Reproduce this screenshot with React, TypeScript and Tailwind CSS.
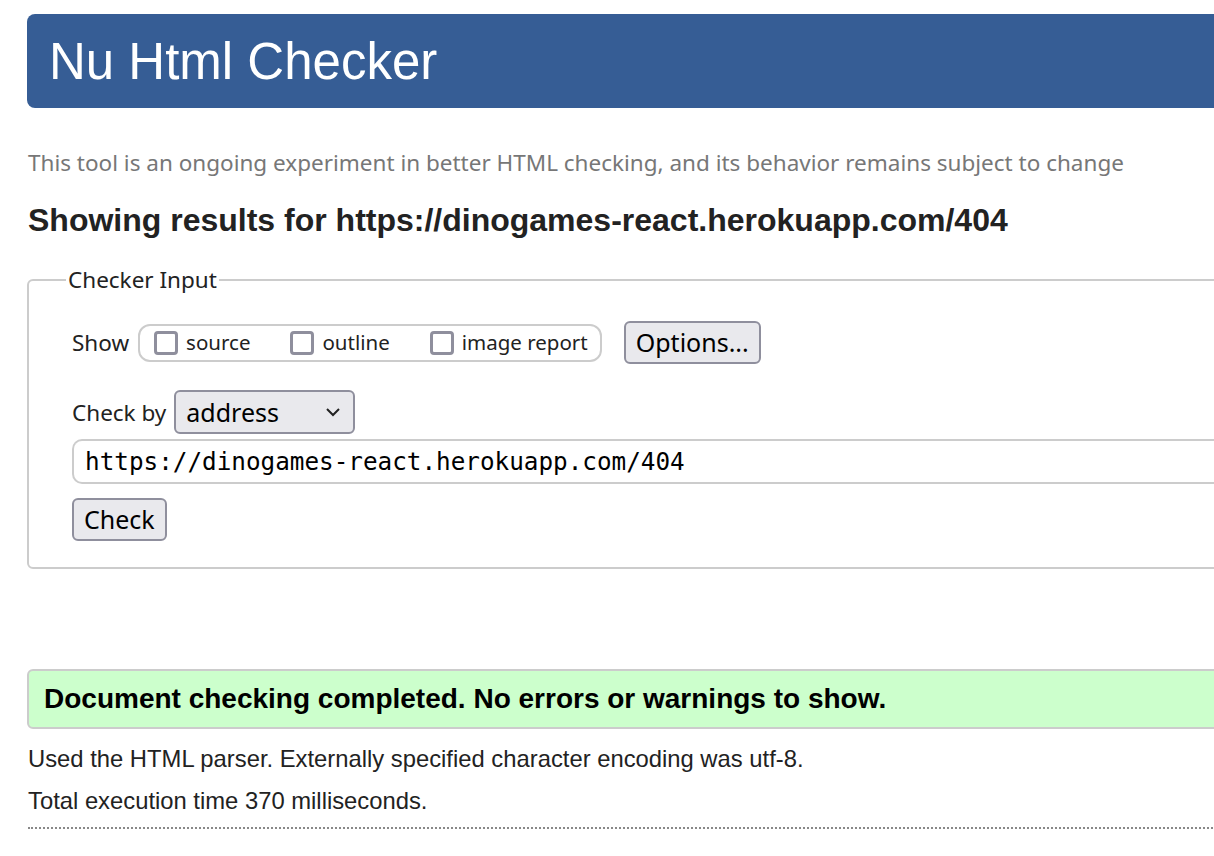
const sans = "font-['Liberation_Sans',Arial,sans-serif]";
const ui = "font-['Noto_Sans','Open_Sans',sans-serif]";

const Box = ({ label }: { label: string }) => (
  <label className="flex items-center gap-[8px] text-[20.5px]">
    <span className="w-[24px] h-[24px] rounded-[4px] border-[3px] border-[#8f8f9d] bg-white" />
    <span>{label}</span>
  </label>
);

const App = () => {
  return (
    <div className="w-[1214px] h-[856px] overflow-hidden bg-white">
      <div className="w-[1400px] pl-[27px] pt-[14px]">
        <div className={`h-[94px] rounded-l-[8px] bg-[#365d95] flex items-center pl-[22px] ${sans}`}>
          <h1 className="text-white text-[51px] leading-none">Nu Html Checker</h1>
        </div>

        <p className={`mt-[38px] pl-[1px] text-[22.5px] leading-[33px] text-[#777] ${ui}`}>
          This tool is an ongoing experiment in better HTML checking, and its behavior remains subject to change
        </p>
        <h2 className={`mt-[21px] pl-[1px] text-[32px] leading-[40px] font-bold text-[#222] ${sans}`}>
          Showing results for https://dinogames-react.herokuapp.com/404
        </h2>

        <fieldset className={`mt-[23px] border-2 border-[#ccc] rounded-[6px] pl-[43px] pr-0 pb-[26px] text-[22.5px] leading-[33px] text-[#222] ${ui}`}>
          <legend className="px-[2px] -ml-[6px]">Checker Input</legend>

          <div className="flex items-center h-[43px] mt-[25px]">
            <span className="mr-[9px]">Show</span>
            <div className="flex items-center h-[38px] border-2 border-[#ccc] rounded-[12px] pl-[14px] pr-[12px] gap-[40px]">
              <Box label="source" />
              <Box label="outline" />
              <Box label="image report" />
            </div>
            <button className="ml-[22px] h-[43px] px-[10px] rounded-[6px] border-2 border-[#8f8f9d] bg-[#e9e9ed] text-[25px] text-black">
              Options...
            </button>
          </div>

          <div className="flex items-center mt-[26px]">
            <span className="mr-[8px]">Check by</span>
            <div className="flex items-center justify-between w-[181px] h-[44px] rounded-[6px] border-2 border-[#8f8f9d] bg-[#e9e9ed] pl-[10px] pr-[12px] text-[25px] text-black">
              <span>address</span>
              <svg width="16" height="10" viewBox="0 0 16 10" fill="none" stroke="#222" strokeWidth="2">
                <path d="M2 2l6 6 6-6" />
              </svg>
            </div>
          </div>

          <div className="mt-[5px] h-[45px] border-2 border-[#ccc] rounded-l-[10px] border-r-0 flex items-center pl-[11px] font-['DejaVu_Sans_Mono','Liberation_Mono',monospace] text-[24.3px] text-black">
            https://dinogames-react.herokuapp.com/404
          </div>

          <button className="mt-[14px] h-[43px] px-[10px] rounded-[6px] border-2 border-[#8f8f9d] bg-[#e9e9ed] text-[25px] leading-none text-black">
            Check
          </button>
        </fieldset>

        <div className={`mt-[100px] h-[60px] flex items-center pl-[15px] bg-[#ccffcc] border-2 border-[#ccc] rounded-l-[6px] ${sans}`}>
          <span className="text-[28px] font-bold text-black">Document checking completed. No errors or warnings to show.</span>
        </div>

        <p className={`mt-[12px] pl-[1px] text-[23.8px] leading-[36px] text-[#222] ${sans}`}>
          Used the HTML parser. Externally specified character encoding was utf-8.
        </p>
        <p className={`mt-[6px] pl-[1px] text-[23.8px] leading-[36px] text-[#222] ${sans}`}>
          Total execution time 370 milliseconds.
        </p>
        <div className="mt-[8px] ml-[1px] border-t-2 border-dotted border-[#888]" />
      </div>
    </div>
  );
};

export default App;
